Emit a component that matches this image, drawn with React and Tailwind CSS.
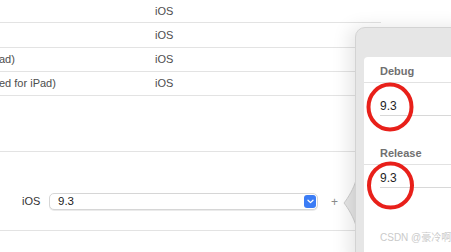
import React from "react";

const font = { fontFamily: '"Liberation Sans", Arial, sans-serif' };

function Row({ h, left, border = true }) {
  return (
    <div
      className={`flex items-center text-[11px] text-[#4d4d4d] ${border ? "border-b border-[#e3e3e3]" : ""}`}
      style={{ height: h }}
    >
      <div className="w-[155px] overflow-hidden whitespace-nowrap">{left}</div>
      <div>iOS</div>
    </div>
  );
}

export default function App() {
  return (
    <div className="relative w-[451px] h-[252px] overflow-hidden bg-white" style={font}>
      {/* table */}
      <div className="w-[381px]">
        <Row h={23} left="" />
        <Row h={25} left="" />
        <Row h={24} left={<span className="-ml-[1px]">ad)</span>} />
        <Row h={24} left={<span className="-ml-[1px]">ed for iPad)</span>} />
      </div>
      <div className="h-[56px] border-b border-[#e3e3e3]" />
      <div className="h-[79px] border-b border-[#e3e3e3] pt-[41px]">
        <div className="flex items-center pl-[22px]">
          <span className="text-[11px] text-[#333] w-[27px]">iOS</span>
          <div className="w-[269px] h-[17px] rounded-[5px] border border-[#d6d6d6] bg-white shadow-[0_1px_0_rgba(0,0,0,0.08)] flex items-center pl-[8px] pr-[1px]">
            <span className="flex-1 text-[11.5px] text-[#222]">9.3</span>
            <div className="w-[12px] h-[13px] rounded-[3px] bg-[#3b7cf5] flex items-center justify-center">
              <svg width="7" height="5" viewBox="0 0 7 5">
                <path d="M1 1.2 L3.5 3.6 L6 1.2" stroke="white" strokeWidth="1.3" fill="none" strokeLinecap="round" strokeLinejoin="round" />
              </svg>
            </div>
          </div>
          <span className="ml-[13px] text-[12px] leading-none text-[#8a8a8a]">+</span>
        </div>
      </div>

      {/* popover arrow */}
      <svg className="absolute left-[338px] top-[176px]" width="20" height="54" viewBox="0 0 20 54">
        <path
          d="M18 4 C 16 12, 10 22, 6 27 C 10 32, 16 42, 18 50"
          fill="#e6e6e6"
          stroke="#cfcfcf"
          strokeWidth="1"
        />
        <rect x="17.5" y="3" width="3" height="48" fill="#e6e6e6" />
      </svg>

      {/* popover */}
      <div className="absolute left-[355px] top-[27px] w-[120px] h-[240px] rounded-tl-[10px] bg-[#e6e6e6] border border-[#d3d3d3] shadow-[-6px_0_18px_rgba(0,0,0,0.10)] pt-[29px] pl-[8px]">
        <div className="h-full bg-white rounded-tl-[4px]">
          <div className="h-[26px] pt-[3px] border-b border-[#e2e2e2] flex items-center pl-[16px] text-[11px] font-bold text-[#707070]">
            Debug
          </div>
          <div className="pl-[16px] pt-[16px]">
            <div className="h-[17px] border-b border-[#d8d8d8] text-[12px] text-[#1f1f1f] leading-[14px]">9.3</div>
          </div>
          <div className="mt-[23px] h-[26px] pt-[3px] border-b border-[#e2e2e2] flex items-center pl-[16px] text-[11px] font-bold text-[#707070]">
            Release
          </div>
          <div className="pl-[16px] pt-[6px]">
            <div className="h-[17px] border-b border-[#d8d8d8] text-[12px] text-[#1f1f1f] leading-[14px]">9.3</div>
          </div>
          <div className="pl-[16px] pt-[42px] text-[10px] text-[#cacaca] whitespace-nowrap" style={{ fontFamily: '"Liberation Sans", "Noto Sans CJK SC", sans-serif' }}>
            CSDN @豪冷啊
          </div>
        </div>
      </div>

      {/* red annotation circles */}
      <svg className="absolute left-0 top-0 pointer-events-none" width="451" height="252">
        <ellipse cx="390" cy="107" rx="21.5" ry="22.5" fill="none" stroke="#e8201a" strokeWidth="4" />
        <ellipse cx="390.5" cy="185.5" rx="21.5" ry="22" fill="none" stroke="#e8201a" strokeWidth="4" />
      </svg>
    </div>
  );
}
